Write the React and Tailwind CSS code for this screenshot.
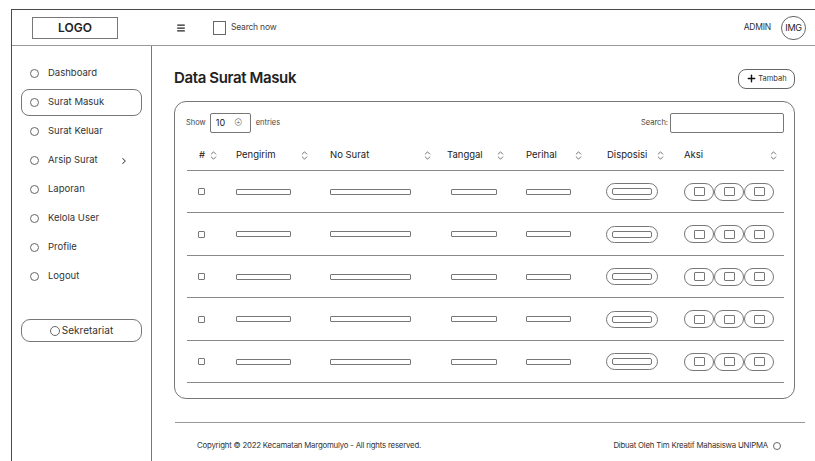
import React from "react";
import { ChevronsUpDown, Menu, Plus, ChevronRight } from "lucide-react";

const menu = [
  { label: "Dashboard" },
  { label: "Surat Masuk", active: true },
  { label: "Surat Keluar" },
  { label: "Arsip Surat", arrow: true },
  { label: "Laporan" },
  { label: "Kelola User" },
  { label: "Profile" },
  { label: "Logout" },
];

// header cells: label, left padding, right padding for the sort icon
const columns = [
  { label: "#", pl: "pl-[12px]", pr: "", inline: true },
  { label: "Pengirim", pl: "pl-[9px]", pr: "pr-[11px]" },
  { label: "No Surat", pl: "pl-[9px]", pr: "pr-[7px]" },
  { label: "Tanggal", pl: "pl-[7px]", pr: "pr-[11px]" },
  { label: "Perihal", pl: "pl-[9px]", pr: "pr-[14px]" },
  { label: "Disposisi", pl: "pl-[9px]", pr: "pr-[9px]" },
  { label: "Aksi", pl: "pl-[9px]", pr: "pr-[4px]" },
];

const rowHeights = ["h-[42px]", "h-[43px]", "h-[42px]", "h-[43px]", "h-[42px]"];

const grid = "grid grid-cols-[40px_94px_119px_77px_81px_77px_108px]";

function Circle({ size = "w-[9px] h-[9px]" }) {
  return <span className={`${size} rounded-full border-[1.3px] border-[#666] shrink-0`} />;
}

function Bar({ w }) {
  return <div className={`${w} h-[6px] border border-[#777] rounded-[1px]`} />;
}

function SortIcon() {
  return <ChevronsUpDown size={11} strokeWidth={1.8} className="text-[#555]" />;
}

function Sidebar() {
  return (
    <aside className="w-[140px] border-r border-[#777] px-[9px] pt-[14px] flex flex-col">
      {menu.map((m) => (
        <div
          key={m.label}
          className={`h-[27px] mb-[2px] flex items-center pl-[8px] rounded-[8px] border ${
            m.active ? "border-[#777]" : "border-transparent"
          }`}
        >
          <Circle />
          <span className="ml-[9px] text-[9.5px] text-[#333]">{m.label}</span>
          {m.arrow && <ChevronRight size={10} strokeWidth={2.5} className="ml-[21px] text-[#444]" />}
        </div>
      ))}
      <div className="mt-[27px] h-[23px] rounded-[9px] border border-[#777] flex items-center justify-center gap-[2px]">
        <Circle size="w-[10px] h-[10px]" />
        <span className="text-[10px] text-[#333]">Sekretariat</span>
      </div>
    </aside>
  );
}

function DataRow({ h }) {
  return (
    <div className={`${grid} ${h} border-b border-[#888] items-center`}>
      <div className="pl-[11px]">
        <div className="w-[7px] h-[7px] border border-[#777] rounded-[1px]" />
      </div>
      <div className="pl-[9px]">
        <Bar w="w-[55px]" />
      </div>
      <div className="pl-[9px]">
        <Bar w="w-[81px]" />
      </div>
      <div className="pl-[11px]">
        <Bar w="w-[46px]" />
      </div>
      <div className="pl-[9px]">
        <Bar w="w-[45px]" />
      </div>
      <div className="pl-[8px]">
        <div className="w-[52px] h-[17px] rounded-full border border-[#777] flex items-center justify-center">
          <div className="w-[40px] h-[7px] border border-[#777] rounded-[2px]" />
        </div>
      </div>
      <div className="pl-[9px] flex">
        {[0, 1, 2].map((i) => (
          <div
            key={i}
            className="w-[30px] h-[18px] rounded-[9px] border border-[#777] flex items-center justify-center"
          >
            <div className="w-[11px] h-[9px] border border-[#777] rounded-[1px]" />
          </div>
        ))}
      </div>
    </div>
  );
}

export default function App() {
  return (
    <div
      className="w-[815px] h-[461px] bg-white overflow-hidden pt-[9px] pl-[11px] text-[#222]"
      style={{ fontFamily: "Inter, 'Noto Sans', sans-serif" }}
    >
      <div className="h-full border-t border-l border-[#4a4a4a] flex flex-col">
        <header className="h-[36px] shrink-0 border-b border-[#999] flex items-center pr-[9px]">
          <div className="ml-[20px] w-[86px] h-[22px] border border-[#777] flex items-center justify-center text-[12px] font-semibold">
            LOGO
          </div>
          <Menu size={10} strokeWidth={3} className="ml-[58px] text-[#222]" />
          <div className="ml-[27px] w-[13px] h-[14px] border border-[#666]" />
          <span className="ml-[5px] text-[8.5px] text-[#444] tracking-tight">Search now</span>
          <span className="ml-auto text-[8.5px] text-[#333] tracking-tight">ADMIN</span>
          <div className="ml-[10px] w-[25px] h-[24px] rounded-full border border-[#666] flex items-center justify-center text-[9px] tracking-tight">
            IMG
          </div>
        </header>

        <div className="flex flex-1">
          <Sidebar />

          <main className="flex-1 flex flex-col">
            <div className="pl-[22px] pr-[20px] pt-[22px]">
              <div className="h-[21px] flex items-center justify-between">
                <h1 className="text-[15px] font-semibold tracking-tight">Data Surat Masuk</h1>
                <button className="h-[20px] w-[57px] rounded-[8px] border border-[#666] flex items-center justify-center gap-[1px] text-[7.5px] text-[#333]">
                  <Plus size={11} strokeWidth={3} className="text-[#111]" />
                  Tambah
                </button>
              </div>

              <div className="mt-[12px] h-[298px] border border-[#777] rounded-[12px] pt-[11px] pb-[14px] pl-[11px] pr-[10px]">
                <div className="flex items-center h-[20px] text-[7.5px] text-[#444]">
                  <span>Show</span>
                  <div className="ml-[4px] w-[41px] h-[20px] border border-[#777] rounded-[2px] flex items-center justify-between pl-[5px] pr-[8px]">
                    <span className="text-[9px] text-[#222]">10</span>
                    <span className="text-[5px] text-[#555]">⊕</span>
                  </div>
                  <span className="ml-[5px]">entries</span>
                  <span className="ml-auto mr-[2px]">Search:</span>
                  <div className="w-[114px] h-[20px] border border-[#777] rounded-[2px]" />
                </div>

                <div className="ml-[1px]">
                  <div className={`${grid} mt-[8px] h-[30px] border-b border-[#888] items-center text-[9.5px] text-[#222]`}>
                    {columns.map((c) => (
                      <div
                        key={c.label}
                        className={`${c.pl} ${c.pr} flex items-center ${c.inline ? "gap-[3px]" : "justify-between"}`}
                      >
                        <span>{c.label}</span>
                        <SortIcon />
                      </div>
                    ))}
                  </div>
                  {rowHeights.map((h, i) => (
                    <DataRow key={i} h={h} />
                  ))}
                </div>
              </div>
            </div>

            <footer className="mt-[23px] ml-[23px] mr-[10px] border-t border-[#999] flex items-center justify-between pt-[17px] pl-[22px] pr-[24px] text-[7.8px] text-[#333] tracking-tight">
              <span>Copyright © 2022 Kecamatan Margomulyo - All rights reserved.</span>
              <span className="flex items-center gap-[5px]">
                Dibuat Oleh Tim Kreatif Mahasiswa UNIPMA
                <Circle size="w-[8px] h-[8px]" />
              </span>
            </footer>
          </main>
        </div>
      </div>
    </div>
  );
}
